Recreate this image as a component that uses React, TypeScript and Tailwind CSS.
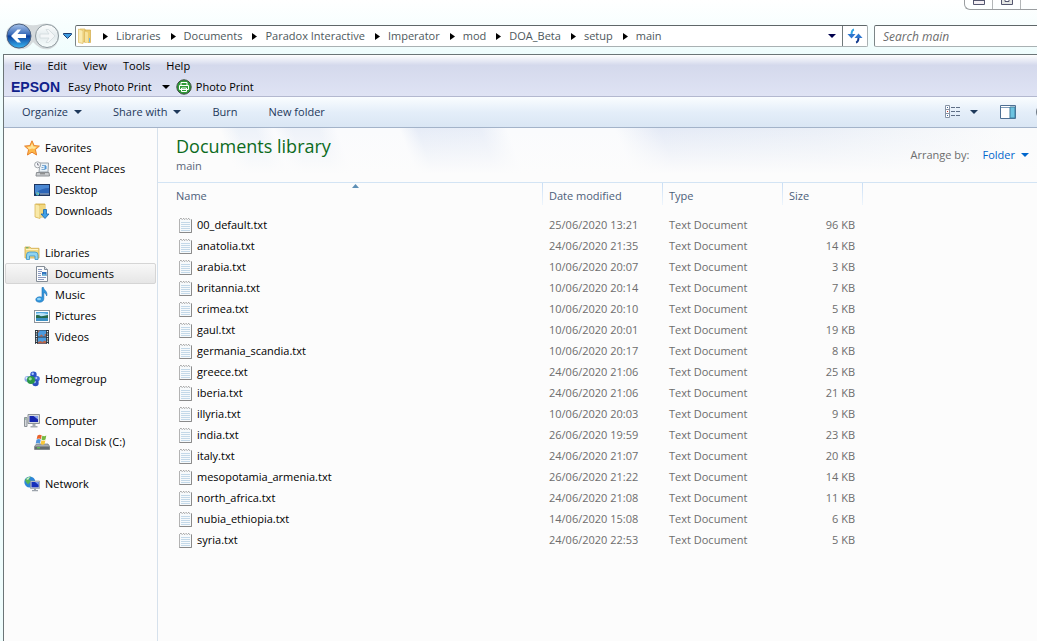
import type { ReactNode } from 'react';

const crumbs = ['Libraries', 'Documents', 'Paradox Interactive', 'Imperator', 'mod', 'DOA_Beta', 'setup', 'main'];
const menus = ['File', 'Edit', 'View', 'Tools', 'Help'];

const files = [
  { name: '00_default.txt', date: '25/06/2020 13:21', size: 96 },
  { name: 'anatolia.txt', date: '24/06/2020 21:35', size: 14 },
  { name: 'arabia.txt', date: '10/06/2020 20:07', size: 3 },
  { name: 'britannia.txt', date: '10/06/2020 20:14', size: 7 },
  { name: 'crimea.txt', date: '10/06/2020 20:10', size: 5 },
  { name: 'gaul.txt', date: '10/06/2020 20:01', size: 19 },
  { name: 'germania_scandia.txt', date: '10/06/2020 20:17', size: 8 },
  { name: 'greece.txt', date: '24/06/2020 21:06', size: 25 },
  { name: 'iberia.txt', date: '24/06/2020 21:06', size: 21 },
  { name: 'illyria.txt', date: '10/06/2020 20:03', size: 9 },
  { name: 'india.txt', date: '26/06/2020 19:59', size: 23 },
  { name: 'italy.txt', date: '24/06/2020 21:07', size: 20 },
  { name: 'mesopotamia_armenia.txt', date: '26/06/2020 21:22', size: 14 },
  { name: 'north_africa.txt', date: '24/06/2020 21:08', size: 11 },
  { name: 'nubia_ethiopia.txt', date: '14/06/2020 15:08', size: 6 },
  { name: 'syria.txt', date: '24/06/2020 22:53', size: 5 },
];

function Icon({ children }: { children: ReactNode }) {
  return (
    <svg className="h-4 w-4 shrink-0" viewBox="0 0 16 16" fill="none" aria-hidden="true">
      {children}
    </svg>
  );
}

function StarIcon() {
  return (
    <Icon>
      <path d="M8 .8l2.1 4.8 5.3.5-4 3.5 1.2 5.4L8 12.2 3.4 15l1.2-5.4-4-3.5 5.3-.5z" fill="#fdb94a" stroke="#e8822e" strokeLinejoin="round" />
      <path d="M8 3.2l1.4 3.2 3.3.4-2.5 2.2L8 8.4 5 9.5 3.2 6.9l3.3-.5z" fill="#ffe49a" />
    </Icon>
  );
}

function RecentIcon() {
  return (
    <Icon>
      <path d="M6 2h8.500l-.5 9H5z" fill="#e9f1f7" stroke="#9aa3ab" />
      <path d="M8 4.500h4M7.500 6.500h2M7.500 8.500h4" stroke="#7fa9cf" />
      <path d="M10.500 5h2v3h-2z" fill="#4f97d8" />
      <path d="M2.500 11.500h12.500l.5 3.500H2z" fill="#c9cccf" stroke="#8b8f93" />
      <path d="M6 12.800h5" stroke="#777" />
      <circle cx="3.600" cy="3.800" r="3" fill="#f7f9fb" stroke="#a0a5aa" />
      <path d="M3.600 2v2h1.500" stroke="#667" strokeWidth=".8" />
    </Icon>
  );
}

function DesktopIcon() {
  return (
    <Icon>
      <rect x=".5" y="2.500" width="15" height="11" fill="#2c65b7" stroke="#1d3561" />
      <path d="M1 3h14v3Q8 6 1 11z" fill="#4a87d2" />
      <path d="M1 11.500h14v1.500H1z" fill="#17315c" />
      <path d="M6 12h9" stroke="#b7c9df" />
      <circle cx="3.500" cy="11.500" r="1.900" fill="#3cb5dc" />
      <path d="M2.500 10.500h1v1h-1z" fill="#ef6a35" />
      <path d="M3.700 11.600h1v1h-1z" fill="#f7d64a" />
    </Icon>
  );
}

function DownloadsIcon() {
  return (
    <Icon>
      <path d="M2 1h9v13H2z" fill="#e9c864" stroke="#d0a943" strokeWidth=".8" />
      <path d="M1 1l5 1.200v13.300L1 14z" fill="#f9e9a8" stroke="#d9b75b" strokeWidth=".8" />
      <path d="M6 2h5v12H6z" fill="#f2d77f" />
      <path d="M9.500 6.500h3V11h2.500l-4 4.500-4-4.500h2.500z" fill="#3fa0e8" stroke="#1966ad" strokeWidth=".8" />
    </Icon>
  );
}

function LibrariesIcon() {
  return (
    <Icon>
      <path d="M1 3.500V2h5l1 1.300h8V13H1z" fill="#f3d981" stroke="#cfa94a" strokeWidth=".8" />
      <path d="M2 4.500h12" stroke="#fff3c2" />
      <path d="M2 2.800h2.500" stroke="#4ca86a" />
      <path d="M2.500 14.500V10q0-3 3-3h5.500q3 0 3 3v4.500h-3V11H5.500v3.500z" fill="#8fd3f1" stroke="#3b93c5" strokeWidth=".8" />
    </Icon>
  );
}

function DocumentsIcon() {
  return (
    <Icon>
      <path d="M2.500.5h8l3 3v12h-11z" fill="#fbfcfd" stroke="#858d96" />
      <path d="M10.500.5v3h3" fill="#d7dee5" stroke="#858d96" />
      <path d="M4 3.500h4M4 5.500h4M4 7.500h3M4 9.500h3M4 11.500h8M4 13.500h6" stroke="#8b9ac0" />
      <path d="M8 6h4.500v4H8z" fill="#2f70bd" />
      <path d="M8 9l2-1.500L12.500 9v1H8z" fill="#79b9d9" />
    </Icon>
  );
}

function MusicIcon() {
  return (
    <Icon>
      <path d="M8 .5h1.500c.3 3 4.500 3.500 3.200 8.500-.6-2.200-1.600-3-2.900-3.300v6.100c0 2-1.800 3.400-4 3.400-2.400 0-4-.9-4-2.500s1.700-2.900 3.900-2.900c.9 0 1.700.2 2.300.5z" fill="#3196dc" stroke="#1c6fb5" strokeWidth=".6" />
      <ellipse cx="5" cy="12" rx="2" ry="1.200" fill="#92d5f8" />
    </Icon>
  );
}

function PicturesIcon() {
  return (
    <Icon>
      <rect x=".5" y="2.500" width="15" height="12" fill="#fff" stroke="#8e959c" />
      <path d="M2 4h12v9H2z" fill="#4fa5dc" />
      <path d="M2 5.500q5-1.500 12 .8V8H2z" fill="#b9e2f6" />
      <path d="M2 7.200q3-.5 5 1.300 3-.6 7-1.500v3H2z" fill="#256a4b" />
      <path d="M2 10h12v3H2z" fill="#3e91c3" />
    </Icon>
  );
}

function VideosIcon() {
  return (
    <Icon>
      <path d="M1 1h14v14H1z" fill="#2b3640" />
      <path d="M4 1.500h8V7.500H4zM4 8.500h8v6H4z" fill="#4b9be0" />
      <path d="M4 1.500h2L4 4zM12 4.500L10 6l2 1.500zM5 7.500l2.500-2 2 2zM4 14.500v-1.500l2.500-1 2 1 2-1.500 1.500 1v2z" fill="#b8654a" />
      <path d="M2.500 2v13M13.500 2v13" stroke="#f1f5f7" strokeWidth="1.300" strokeDasharray="1.200 1.200" />
    </Icon>
  );
}

function HomegroupIcon() {
  return (
    <Icon>
      <circle cx="3.500" cy="8" r="3" fill="#8aa9e8" />
      <circle cx="2.700" cy="7" r="1.200" fill="#dbe8ff" />
      <circle cx="9.500" cy="3.800" r="3.200" fill="#2851c6" />
      <circle cx="8.700" cy="2.800" r="1.200" fill="#a7c6ff" />
      <circle cx="13" cy="7.800" r="2.800" fill="#4169d6" />
      <circle cx="12.300" cy="7" r="1" fill="#b6ceff" />
      <circle cx="11.500" cy="12" r="3.200" fill="#2a50bd" />
      <circle cx="10.700" cy="11" r="1.200" fill="#9dbcf8" />
      <circle cx="7" cy="9" r="4" fill="#2a9648" />
      <circle cx="6.200" cy="7.800" r="1.600" fill="#9ae3a0" />
    </Icon>
  );
}

function ComputerIcon() {
  return (
    <Icon>
      <path d="M.5 4.500h2.500v9H.5z" fill="#d4d8db" stroke="#8d9398" />
      <path d="M1.200 6h1" stroke="#4ba35d" />
      <path d="M4 1.500h11.500v9H4z" fill="#d5d9de" stroke="#8d9398" />
      <path d="M5.500 3h8.500v6H5.500z" fill="#1627ad" />
      <path d="M9.500 3H14v3.500z" fill="#8ba5ef" />
      <path d="M8.500 11h3v2h2v1.500h-7V13h2z" fill="#a5abb0" />
    </Icon>
  );
}

function DiskIcon() {
  return (
    <Icon>
      <path d="M2.500 10h11.500l1.700 2.500v3H.5v-3z" fill="#a8adb0" stroke="#6f7579" strokeWidth=".7" />
      <path d="M1 12.500h14.500v2.700H1z" fill="#646c70" />
      <path d="M3 13.800h3" stroke="#5edc4d" />
      <path d="M3.500 1.500q2-1.500 4.200-.2L7 5q-2-1-4.300.1z" fill="#e9632d" />
      <path d="M8.300 1.800q2 1 4-.2l-.8 3.900q-2 1.200-4 .1z" fill="#75b843" />
      <path d="M2.500 5.800q2.200-1.300 4.300-.1L6 9.500Q4 8.300 1.700 9.500z" fill="#4f94df" />
      <path d="M7.400 6.300q2 1.100 4 0l-.8 3.800q-2 1.100-3.900 0z" fill="#f9c838" />
    </Icon>
  );
}

function NetworkIcon() {
  return (
    <Icon>
      <circle cx="5.800" cy="6" r="5.500" fill="#2d86d8" />
      <path d="M1 4Q3.500 0 7 .8L5 3.500 7 5 4 8.500 2 6z" fill="#55b555" />
      <path d="M2 3q2-2 4-2L4 4z" fill="#c5edd0" />
      <path d="M6.500 5h9v7.500h-9z" fill="#c9ced6" stroke="#858d99" strokeWidth=".6" />
      <path d="M7.500 6h7.200v5.300H7.500z" fill="#1730ba" />
      <path d="M11 6h3.700v3z" fill="#809eec" />
      <path d="M10 12.500h2v1.500h2v1.200H8V14h2z" fill="#9da4ac" />
    </Icon>
  );
}

function TextFileIcon() {
  return (
    <Icon>
      <path d="M1.500 1.500h12v14h-12z" fill="#f7fafc" stroke="#b3b3b3" />
      <path d="M3 5.500h9M3 7.500h9M3 9.500h9M3 11.500h9M3 13.500h9" stroke="#c3d8e8" />
      <path d="M13.500 3v12.500h-12" stroke="#8a8a8a" />
      <path d="M1 0h13v2H1z" fill="#fcfcfc" />
      <path d="M2 1.500h1.500l1 1.500M5 1.500h1l1 1.500M7.500 1.500h1l1 1.500M10 1.500h1l1 1.500" stroke="#a2a2a2" strokeWidth=".9" />
    </Icon>
  );
}

function FolderIcon() {
  return (
    <Icon>
      <path d="M3 1h5v13H3z" fill="#f5dc8a" stroke="#d7b354" strokeWidth=".7" />
      <path d="M8 2h5.500v12.500H8z" fill="#eccb6b" stroke="#d1aa4b" strokeWidth=".7" />
      <path d="M1.500 1l4.500 1.500v13l-4.500-1z" fill="#faebb0" stroke="#dfbd63" strokeWidth=".7" />
      <path d="M8 3.500l3 1V15l-3-.5z" fill="#f7e29b" />
      <path d="M12.500 10v4" stroke="#73b6e4" />
    </Icon>
  );
}

const places = [
  {
    label: 'Favorites',
    icon: <StarIcon />,
    items: [
      { label: 'Recent Places', icon: <RecentIcon /> },
      { label: 'Desktop', icon: <DesktopIcon /> },
      { label: 'Downloads', icon: <DownloadsIcon /> },
    ],
  },
  {
    label: 'Libraries',
    icon: <LibrariesIcon />,
    items: [
      { label: 'Documents', icon: <DocumentsIcon />, active: true },
      { label: 'Music', icon: <MusicIcon /> },
      { label: 'Pictures', icon: <PicturesIcon /> },
      { label: 'Videos', icon: <VideosIcon /> },
    ],
  },
  { label: 'Homegroup', icon: <HomegroupIcon />, items: [] },
  { label: 'Computer', icon: <ComputerIcon />, items: [{ label: 'Local Disk (C:)', icon: <DiskIcon /> }] },
  { label: 'Network', icon: <NetworkIcon />, items: [] },
];

function Caret() {
  return (
    <svg className="h-1 w-2 shrink-0" viewBox="0 0 8 4" fill="currentColor" aria-hidden="true">
      <path d="M0 0h8L4 4z" />
    </svg>
  );
}

function NavButtons() {
  return (
    <div className="relative flex h-7 w-[56px] shrink-0 items-center">
      <svg className="absolute inset-0 h-7 w-[56px]" viewBox="0 0 56 28" fill="none" aria-hidden="true">
        <defs>
          <linearGradient id="back" x1="0" y1="0" x2="0" y2="1">
            <stop offset="0" stopColor="#a9c4ea" />
            <stop offset=".45" stopColor="#3568b8" />
            <stop offset=".5" stopColor="#0c3f9c" />
            <stop offset="1" stopColor="#39b7f2" />
          </linearGradient>
          <linearGradient id="forward" x1="0" y1="0" x2="0" y2="1">
            <stop offset="0" stopColor="#fdfefe" />
            <stop offset=".5" stopColor="#e3ebed" />
            <stop offset="1" stopColor="#f7fdfd" />
          </linearGradient>
        </defs>
        <path d="M9 2Q14 .5 20 2q8 2.500 16 0 6-1.500 12 1 7 5 6 12-1 9-9 12-9 2-17-7-6 9-16 7Q1 24 1 14 1 5 9 2z" fill="#d5dadc" />
        <circle cx="14" cy="14" r="12" fill="url(#back)" stroke="#4b6180" />
        <circle cx="42" cy="14" r="11.500" fill="url(#forward)" stroke="#8d999e" />
        <path d="M6 14l6.500-6.500h3.500L12.500 12H21v4h-8.500l3.500 4.500h-3.500z" fill="#fff" />
        <path d="M50 14l-6.500-6.500H41l3 4.500h-9v4h9l-3 4.500h2.500z" fill="#f4f7f8" stroke="#d2dadd" strokeWidth=".8" />
      </svg>
      <button type="button" aria-label="Back" className="relative h-7 w-7 rounded-full" />
      <button type="button" aria-label="Forward" className="relative h-7 w-7 rounded-full" />
    </div>
  );
}

function AddressBar() {
  return (
    <div className="flex h-[22px] min-w-0 flex-1 rounded-xs border border-[#a9b1b3] border-t-[#5f6769] border-l-[#7c8587] bg-white">
      <nav aria-label="Address" className="flex min-w-0 flex-1 items-center overflow-hidden pl-px">
        <FolderIcon />
        {crumbs.map((crumb) => (
          <span key={crumb} className="flex items-center">
            <svg className="mr-2 ml-[10px] h-[7px] w-[5px]" viewBox="0 0 5 7" aria-hidden="true">
              <path d="M0 0l5 3.500L0 7z" fill="#000" />
            </svg>
            <a href="#" className="whitespace-nowrap text-[#4d585c]">{crumb}</a>
          </span>
        ))}
      </nav>
      <button type="button" aria-label="Previous locations" className="px-[6px] text-[#00004d]">
        <Caret />
      </button>
      <button type="button" aria-label="Refresh" className="flex w-[25px] items-center justify-center border-l border-[#70797b]">
        <svg className="h-4 w-4" viewBox="0 0 16 16" fill="none" aria-hidden="true">
          <path d="M7 1.500Q4.500 2 4.500 7" stroke="#32a6e4" strokeWidth="2" />
          <path d="M.5 6h8l-4 4.500z" fill="#2d75ce" />
          <path d="M9 14.500q2.500-.5 2.500-5.500" stroke="#173d8f" strokeWidth="2" />
          <path d="M7.500 10h8l-4-4.500z" fill="#2d75ce" />
        </svg>
      </button>
    </div>
  );
}

function WindowControls() {
  return (
    <div className="flex h-[10px] self-end rounded-bl-md border-b border-l border-[#9a9da0]">
      <button type="button" aria-label="Minimize" className="flex w-7 justify-center border-r border-[#b3b6b8]">
        <svg className="h-[5px] w-3" viewBox="0 0 12 5" aria-hidden="true">
          <path d="M.5-1v5.500h11V-1M.5.5h11" fill="#f3eef3" stroke="#54566f" />
        </svg>
      </button>
      <button type="button" aria-label="Maximize" className="flex w-7 justify-center border-r border-[#b3b6b8]">
        <svg className="h-[5px] w-3" viewBox="0 0 12 5" aria-hidden="true">
          <path d="M.5-1v5.500h11V-1" fill="#e4e6e4" stroke="#54566f" />
          <path d="M4-1v2.500h4V-1" fill="#fff" stroke="#54566f" />
        </svg>
      </button>
      <button type="button" aria-label="Close" className="w-4" />
    </div>
  );
}

function Sidebar() {
  return (
    <aside className="w-[154px] shrink-0 border-r border-[#d6e1ec] bg-[#fcfcfc] pt-[9px] text-black">
      {places.map((group) => (
        <div key={group.label} className="mb-[21px]">
          <a href="#" className="flex h-[21px] items-center gap-[5px] pl-5">
            {group.icon}
            {group.label}
          </a>
          {group.items.map((item) => (
            <a
              key={item.label}
              href="#"
              className={`mx-px flex h-[21px] items-center gap-[5px] rounded-xs border pl-7 ${
                'active' in item ? 'border-[#d5d5d5] bg-linear-to-b from-[#f8f8f8] to-[#e6e6e6]' : 'border-transparent'
              }`}
            >
              {item.icon}
              {item.label}
            </a>
          ))}
        </div>
      ))}
    </aside>
  );
}

function FileTable() {
  const headCell = 'relative h-[27px] border-t border-[#d3e4f4] px-[6px] text-left font-normal text-[#4c607a]';
  const divider = <span className="absolute top-0 right-0 h-[22px] w-px bg-linear-to-b from-[#c9def5] to-[#eef5fc]" />;

  return (
    <table className="w-full table-fixed border-separate border-spacing-0">
      <colgroup>
        <col className="w-[385px]" />
        <col className="w-[120px]" />
        <col className="w-[120px]" />
        <col className="w-[80px]" />
        <col />
      </colgroup>
      <thead>
        <tr>
          <th className={`${headCell} pl-[18px]`}>
            Name
            <svg className="absolute top-px left-1/2 ml-px h-1 w-[7px]" viewBox="0 0 7 4" aria-hidden="true">
              <path d="M0 4l3.500-4L7 4z" fill="#5d8fb5" />
            </svg>
            {divider}
          </th>
          <th className={headCell}>Date modified{divider}</th>
          <th className={headCell}>Type{divider}</th>
          <th className={headCell}>Size{divider}</th>
          <td className="border-t border-[#d3e4f4]" />
        </tr>
        <tr className="h-[5px]" />
      </thead>
      <tbody className="text-[#6d6d6d]">
        {files.map((file) => (
          <tr key={file.name} className="h-[21px]">
            <td className="pl-5">
              <a href="#" className="flex items-center gap-[3px] text-black">
                <TextFileIcon />
                {file.name}
              </a>
            </td>
            <td className="px-[6px] whitespace-nowrap">{file.date}</td>
            <td className="px-[6px]">Text Document</td>
            <td className="px-2 text-right">{file.size} KB</td>
            <td />
          </tr>
        ))}
      </tbody>
    </table>
  );
}

export default function App() {
  return (
    <div className="flex min-h-screen flex-col overflow-hidden bg-linear-to-b from-white to-[#effdfd] to-[54px] font-['Open_Sans','Noto_Sans',sans-serif] text-[11px] leading-4">
      <WindowControls />
      <header className="flex items-center pt-3 pb-1 pl-[5px]">
        <NavButtons />
        <button type="button" aria-label="Recent pages" className="mr-[3px] ml-[2px] flex w-[9px] justify-center">
          <svg className="h-[6px] w-[9px]" viewBox="0 0 9 6" aria-hidden="true">
            <path d="M.5.5h8v1l-4 4-4-4z" fill="#3d9be0" stroke="#1c3f73" />
          </svg>
        </button>
        <AddressBar />
        <input
          type="search"
          aria-label="Search main"
          placeholder="Search main"
          className="ml-[6px] h-[22px] w-[163px] rounded-l-xs border border-r-0 border-[#a9b1b3] border-t-[#5f6769] border-l-[#7c8587] bg-white px-2 text-xs italic placeholder:text-[#6d6d6d]"
        />
      </header>

      <div className="ml-[3px] flex flex-1 flex-col border-t border-l border-[#6b7577] bg-[#fcfcfc]">
        <div className="border-b border-[#b3b8cf] bg-linear-to-b from-white from-0% via-[#d4d9ec] via-25% to-[#dfe3f4]">
          <div role="menubar" className="flex h-[22px] items-center pl-[2px] text-black">
            {menus.map((menu) => (
              <button key={menu} type="button" role="menuitem" className="px-2">
                {menu}
              </button>
            ))}
          </div>
          <div className="flex h-[19px] items-center pl-[7px] text-black">
            <span className="mr-2 font-['Liberation_Sans',Arial,sans-serif] text-sm font-bold text-[#10218b]">EPSON</span>
            <button type="button" className="flex items-center gap-[10px]">
              Easy Photo Print
              <Caret />
            </button>
            <button type="button" className="ml-[6px] flex items-center gap-1">
              <Icon>
                <circle cx="8" cy="8" r="7.200" fill="#2e9b36" stroke="#3c4a3e" />
                <path d="M5 6V3.500h6V6M3.500 6.500h9v4h-9zM5.500 9h5v3.500h-5z" fill="#2e9b36" stroke="#fff" />
              </Icon>
              Photo Print
            </button>
          </div>
        </div>

        <div className="flex h-[31px] items-center border-b border-[#a3b3c9] bg-linear-to-b from-[#fafdff] via-[#e4eef9] via-50% to-[#dae6f4] pl-[18px] text-[#1e395b]">
          <div className="flex items-center gap-[31px]">
            <button type="button" className="flex items-center gap-[6px]">Organize <Caret /></button>
            <button type="button" className="flex items-center gap-[6px]">Share with <Caret /></button>
            <button type="button">Burn</button>
            <button type="button">New folder</button>
          </div>
          <div className="ml-auto flex items-center">
            <button type="button" aria-label="Change your view" className="flex items-center gap-[9px]">
              <Icon>
                <path d="M.5 1.500h4v12h-4zM.5 5.500h4M.5 9.500h4" fill="#fff" stroke="#8793a5" />
                <path d="M2 3h1v1H2zM2 11h1v1H2z" fill="#35659f" />
                <path d="M2 7h1v1H2z" fill="#c8362c" />
                <path d="M6 3.500h4M11 3.500h4M6 7.500h4M11 7.500h4M6 11.500h4M11 11.500h4" stroke="#5f6f86" />
              </Icon>
              <Caret />
            </button>
            <button type="button" aria-label="Show the preview pane" className="ml-[22px]">
              <Icon>
                <path d="M.5 1.500h15v13H.5z" fill="#fff" stroke="#4d6f93" />
                <path d="M1 3.500h14" stroke="#7f9cba" />
                <path d="M10 3h5v11h-5z" fill="#6cc3e0" stroke="#3f7d9e" />
              </Icon>
            </button>
            <button type="button" aria-label="Help" className="ml-5 h-4 w-px overflow-hidden">
              <svg className="h-4 w-4" viewBox="0 0 16 16" aria-hidden="true">
                <circle cx="8" cy="8" r="8" fill="#6d7782" />
              </svg>
            </button>
          </div>
        </div>

        <div className="flex flex-1">
          <Sidebar />
          <main className="min-w-0 flex-1">
            <div className="flex h-[54px] items-center justify-between bg-[linear-gradient(to_bottom,transparent,#fcfcfc_85%),linear-gradient(70deg,#fcfcfc_9%,#edf2f9_11%,#edf2f9_13%,#fafbfd_15%,#eef2f9_17%,#eef2f9_20%,#fafbfd_22%,#fafbfd_29%,#e6ecf7_31%,#e9eef8_38%,#fafbfd_41%,#fafbfd_53%,#e4eaf6_58%,#eaeff7_75%,#fafbfc_96%)] pr-2 pl-[18px]">
              <div>
                <h1 className="pb-[2px] text-lg leading-5 text-[#0c6b1d]">Documents library</h1>
                <p className="text-[#5a6779]">main</p>
              </div>
              <div className="flex gap-[13px] text-[#6d6d6d]">
                <span>Arrange by:</span>
                <button type="button" className="flex items-center gap-[6px] text-[#0066cc]">Folder <Caret /></button>
              </div>
            </div>
            <FileTable />
          </main>
        </div>
      </div>
    </div>
  );
}
